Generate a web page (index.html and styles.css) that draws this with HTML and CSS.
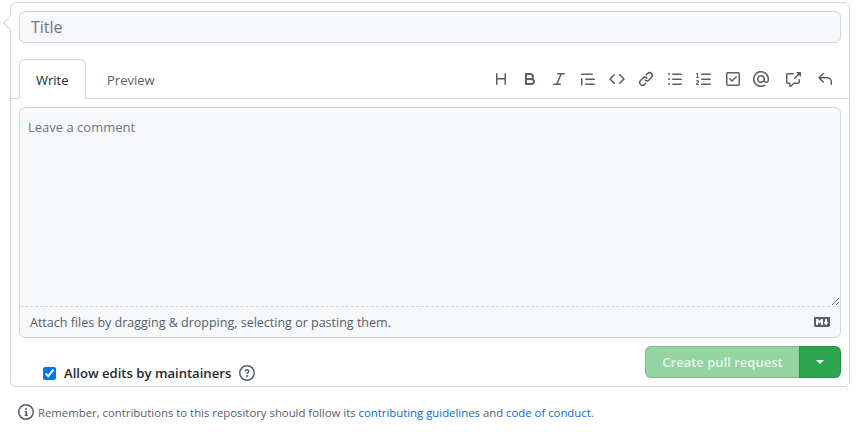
FILE: index.html
```html
<!DOCTYPE html>
<html lang="en">
<head>
    <meta charset="UTF-8">
    <title>Open a pull request</title>
    <link rel="stylesheet" href="styles.css">
</head>
<body>
    <div class="discussion-box">
        <span class="caret"></span>
        <div class="title-row">
            <input type="text" class="title-input" placeholder="Title">
        </div>

        <div class="tab-bar">
            <div class="tabs">
                <span class="tab selected">Write</span>
                <span class="tab">Preview</span>
            </div>
            <div class="toolbar">
                <svg class="icon" viewBox="0 0 16 16"><path d="M3.75 2a.75.75 0 0 1 .75.75V7h7V2.75a.75.75 0 0 1 1.5 0v10.5a.75.75 0 0 1-1.5 0V8.5h-7v4.75a.75.75 0 0 1-1.5 0V2.75A.75.75 0 0 1 3.75 2Z"/></svg>
                <svg class="icon" viewBox="0 0 16 16"><path d="M4 2h4.5a3.501 3.501 0 0 1 2.852 5.53A3.499 3.499 0 0 1 9.5 14H4a1 1 0 0 1-1-1V3a1 1 0 0 1 1-1Zm1 7v3h4.5a1.5 1.5 0 0 0 0-3Zm3.5-2a1.5 1.5 0 0 0 0-3H5v3Z"/></svg>
                <svg class="icon" viewBox="0 0 16 16"><path d="M6 2.75A.75.75 0 0 1 6.75 2h6.5a.75.75 0 0 1 0 1.5h-2.505l-3.858 9H9.25a.75.75 0 0 1 0 1.5h-6.5a.75.75 0 0 1 0-1.5h2.505l3.858-9H6.75A.75.75 0 0 1 6 2.75Z"/></svg>
                <svg class="icon" viewBox="0 0 16 16"><path d="M1.75 2.5h10.5a.75.75 0 0 1 0 1.5H1.75a.75.75 0 0 1 0-1.5Zm4 5h8.5a.75.75 0 0 1 0 1.5h-8.5a.75.75 0 0 1 0-1.5Zm0 5h8.5a.75.75 0 0 1 0 1.5h-8.5a.75.75 0 0 1 0-1.5ZM2.5 7.75v6a.75.75 0 0 1-1.5 0v-6a.75.75 0 0 1 1.5 0Z"/></svg>
                <svg class="icon" viewBox="0 0 16 16"><path d="m11.28 3.22 4.25 4.25a.75.75 0 0 1 0 1.06l-4.25 4.25a.749.749 0 0 1-1.275-.326.749.749 0 0 1 .215-.734L13.94 8l-3.72-3.72a.749.749 0 0 1 .326-1.275.749.749 0 0 1 .734.215Zm-6.56 0a.751.751 0 0 1 1.042.018.751.751 0 0 1 .018 1.042L2.06 8l3.72 3.72a.749.749 0 0 1-.326 1.275.749.749 0 0 1-.734-.215L.47 8.53a.75.75 0 0 1 0-1.06Z"/></svg>
                <svg class="icon" viewBox="0 0 16 16"><path d="m7.775 3.275 1.25-1.25a3.5 3.5 0 1 1 4.95 4.95l-2.5 2.5a3.5 3.5 0 0 1-4.95 0 .751.751 0 0 1 .018-1.042.751.751 0 0 1 1.042-.018 1.998 1.998 0 0 0 2.83 0l2.5-2.5a2.002 2.002 0 0 0-2.83-2.83l-1.25 1.25a.751.751 0 0 1-1.042-.018.751.751 0 0 1-.018-1.042Zm-4.69 9.64a1.998 1.998 0 0 0 2.83 0l1.25-1.25a.751.751 0 0 1 1.042.018.751.751 0 0 1 .018 1.042l-1.25 1.25a3.5 3.5 0 1 1-4.95-4.95l2.5-2.5a3.5 3.5 0 0 1 4.95 0 .751.751 0 0 1-.018 1.042.751.751 0 0 1-1.042.018 1.998 1.998 0 0 0-2.83 0l-2.5 2.5a1.998 1.998 0 0 0 0 2.83Z"/></svg>
                <svg class="icon" viewBox="0 0 16 16"><path d="M5.75 2.5h8.5a.75.75 0 0 1 0 1.5h-8.5a.75.75 0 0 1 0-1.5Zm0 5h8.5a.75.75 0 0 1 0 1.5h-8.5a.75.75 0 0 1 0-1.5Zm0 5h8.5a.75.75 0 0 1 0 1.5h-8.5a.75.75 0 0 1 0-1.5ZM2 14a1 1 0 1 1 0-2 1 1 0 0 1 0 2Zm1-6a1 1 0 1 1-2 0 1 1 0 0 1 2 0ZM2 4a1 1 0 1 1 0-2 1 1 0 0 1 0 2Z"/></svg>
                <svg class="icon" viewBox="0 0 16 16"><path d="M5 3.25a.75.75 0 0 1 .75-.75h8.5a.75.75 0 0 1 0 1.5h-8.5A.75.75 0 0 1 5 3.25Zm0 5a.75.75 0 0 1 .75-.75h8.5a.75.75 0 0 1 0 1.5h-8.5A.75.75 0 0 1 5 8.25Zm0 5a.75.75 0 0 1 .75-.75h8.5a.75.75 0 0 1 0 1.5h-8.5a.75.75 0 0 1-.75-.75ZM.924 10.32a.5.5 0 0 1-.851-.525l.001-.001.001-.002.002-.004.007-.011c.097-.144.215-.273.348-.384.228-.19.588-.392 1.068-.392.468 0 .858.181 1.126.484.259.294.377.673.377 1.038 0 .987-.686 1.495-1.156 1.845l-.047.035c-.303.225-.522.4-.654.597h1.357a.5.5 0 0 1 0 1H.5a.5.5 0 0 1-.5-.5c0-1.005.692-1.52 1.167-1.875l.035-.025c.531-.396.8-.625.8-1.078a.57.57 0 0 0-.128-.376C1.806 10.068 1.695 10 1.5 10a.658.658 0 0 0-.429.163.835.835 0 0 0-.144.153ZM2.003 2.5V6h.503a.5.5 0 0 1 0 1H.5a.5.5 0 0 1 0-1h.503V3.308l-.28.14a.5.5 0 0 1-.446-.895l1.003-.5a.5.5 0 0 1 .723.447Z"/></svg>
                <svg class="icon" viewBox="0 0 16 16"><path d="M2.75 1h10.5C14.216 1 15 1.784 15 2.75v10.5A1.75 1.75 0 0 1 13.25 15H2.75A1.75 1.75 0 0 1 1 13.25V2.75C1 1.784 1.784 1 2.75 1Zm0 1.5a.25.25 0 0 0-.25.25v10.5c0 .138.112.25.25.25h10.5a.25.25 0 0 0 .25-.25V2.75a.25.25 0 0 0-.25-.25Zm9.03 3.78-4.25 4.25a.75.75 0 0 1-1.06 0L4.22 8.28a.75.75 0 0 1 1.06-1.06L7 8.94l3.72-3.72a.75.75 0 0 1 1.06 1.06Z"/></svg>
                <svg class="icon mention" viewBox="0 0 16 16"><path d="M4.75 2.37a6.501 6.501 0 0 0 6.5 11.26.75.75 0 0 1 .75 1.298A7.999 7.999 0 0 1 .989 4.148 8 8 0 0 1 16 7.75v1.5a2.75 2.75 0 0 1-5.072 1.475 3.999 3.999 0 0 1-6.65-4.19A4 4 0 0 1 12 8v1.25a1.25 1.25 0 0 0 2.5 0V7.867a6.5 6.5 0 0 0-9.75-5.496ZM10.5 8a2.5 2.5 0 1 0-5 0 2.5 2.5 0 0 0 5 0Z"/></svg>
                <svg class="icon group-start" viewBox="0 0 16 16"><path d="M2.75 3.5a.25.25 0 0 0-.25.25v7.5c0 .138.112.25.25.25h2a.75.75 0 0 1 .75.75v2.19l2.72-2.72a.749.749 0 0 1 .53-.22h4.5a.25.25 0 0 0 .25-.25v-2.5a.75.75 0 0 1 1.5 0v2.5A1.75 1.75 0 0 1 13.25 13H9.06l-2.573 2.573A1.458 1.458 0 0 1 4 14.543V13H2.75A1.75 1.75 0 0 1 1 11.25v-7.5C1 2.784 1.784 2 2.75 2h5.5a.75.75 0 0 1 0 1.5ZM16 1.25v4.146a.25.25 0 0 1-.427.177L14.03 4.03l-3.75 3.75a.749.749 0 0 1-1.275-.326.749.749 0 0 1 .215-.734l3.75-3.75-1.543-1.543A.25.25 0 0 1 11.604 1h4.146a.25.25 0 0 1 .25.25Z"/></svg>
                <svg class="icon group-start" viewBox="0 0 16 16"><path d="M6.78 1.97a.75.75 0 0 1 0 1.06L3.81 6h6.44A4.75 4.75 0 0 1 15 10.75v2.5a.75.75 0 0 1-1.5 0v-2.5a3.25 3.25 0 0 0-3.25-3.25H3.81l2.97 2.97a.749.749 0 0 1-.326 1.275.749.749 0 0 1-.734-.215L1.47 7.28a.75.75 0 0 1 0-1.06l4.25-4.25a.75.75 0 0 1 1.06 0Z"/></svg>
            </div>
        </div>

        <div class="write-pane">
            <textarea class="comment-input" placeholder="Leave a comment"></textarea>
            <div class="attach-bar">
                <span>Attach files by dragging &amp; dropping, selecting or pasting them.</span>
                <svg class="icon md-icon" viewBox="0 0 16 16"><path d="M14.85 3c.63 0 1.15.52 1.14 1.15v7.7c0 .63-.51 1.15-1.15 1.15H1.15C.52 13 0 12.48 0 11.84V4.15C0 3.52.52 3 1.15 3ZM9 11V5H7L5.5 7 4 5H2v6h2V8l1.5 1.92L7 8v3Zm2.99.5L14.5 8H13V5h-2v3H9.5Z"/></svg>
            </div>
        </div>

        <div class="actions">
            <label class="maintainer-check">
                <input type="checkbox" checked>
                <span>Allow edits by maintainers</span>
                <svg class="icon help-icon" viewBox="0 0 16 16"><path d="M0 8a8 8 0 1 1 16 0A8 8 0 0 1 0 8Zm8-6.5a6.5 6.5 0 1 0 0 13 6.5 6.5 0 0 0 0-13ZM6.92 6.085h.001a.749.749 0 1 1-1.342-.67c.169-.339.436-.701.849-.977C6.845 4.16 7.369 4 8 4a2.756 2.756 0 0 1 1.637.525c.503.377.863.965.863 1.725 0 .448-.115.83-.329 1.15-.205.307-.47.513-.692.662-.109.072-.22.138-.313.195l-.006.004a6.24 6.24 0 0 0-.26.16.952.952 0 0 0-.276.245.75.75 0 0 1-1.248-.832c.184-.264.42-.489.692-.661.103-.067.207-.132.313-.195l.007-.004c.1-.061.182-.11.258-.161a.969.969 0 0 0 .277-.245C8.96 6.514 9 6.427 9 6.25a.612.612 0 0 0-.262-.525A1.27 1.27 0 0 0 8 5.5c-.369 0-.595.09-.74.187a1.01 1.01 0 0 0-.34.398ZM9 11a1 1 0 1 1-2 0 1 1 0 0 1 2 0Z"/></svg>
            </label>
            <div class="btn-group">
                <button class="btn-create" disabled>Create pull request</button>
                <button class="btn-caret"><span class="down-caret"></span></button>
            </div>
        </div>
    </div>

    <p class="footer-note">
        <svg class="icon" viewBox="0 0 16 16"><path d="M0 8a8 8 0 1 1 16 0A8 8 0 0 1 0 8Zm8-6.5a6.5 6.5 0 1 0 0 13 6.5 6.5 0 0 0 0-13ZM6.5 7.75A.75.75 0 0 1 7.25 7h1a.75.75 0 0 1 .75.75v2.75h.25a.75.75 0 0 1 0 1.5h-2a.75.75 0 0 1 0-1.5h.25v-2h-.25a.75.75 0 0 1-.75-.75ZM8 6a1 1 0 1 1 0-2 1 1 0 0 1 0 2Z"/></svg>
        <span>Remember, contributions to this repository should follow its <a href="#">contributing guidelines</a> and <a href="#">code of conduct</a>.</span>
    </p>
</body>
</html>
```

FILE: styles.css
```css
body {
    font-family: "Open Sans", "Noto Sans", sans-serif;
    font-size: 14px;
    color: #24292f;
    background-color: #ffffff;
    margin: 0;
    padding: 2px 16px 0 10px;
    overflow: hidden;
}

.icon {
    display: block;
    width: 16px;
    height: 16px;
    flex: none;
    fill: #57606a;
}

.discussion-box {
    position: relative;
    height: 385px;
    box-sizing: border-box;
    border: 1px solid #d0d7de;
    border-radius: 6px;
    background-color: #ffffff;
}

/* little arrow on the left edge */
.caret {
    position: absolute;
    left: -6px;
    top: 15px;
    width: 9px;
    height: 9px;
    background-color: #ffffff;
    border-left: 1px solid #d0d7de;
    border-bottom: 1px solid #d0d7de;
    transform: rotate(45deg);
}

.title-row {
    padding: 8px 8px 0;
}

.title-input {
    display: block;
    width: 100%;
    height: 32px;
    box-sizing: border-box;
    padding: 0 11px;
    border: 1px solid #d0d7de;
    border-radius: 6px;
    background-color: #f6f8fa;
    font-family: inherit;
    font-size: 16px;
}

.title-input::placeholder, .comment-input::placeholder {
    color: #6e7781;
    opacity: 1;
}

.tab-bar {
    display: flex;
    justify-content: space-between;
    align-items: center;
    height: 40px;
    margin-top: 15px;
    padding: 0 8px;
    border-bottom: 1px solid #d0d7de;
}

.tabs {
    display: flex;
    align-self: flex-end;
    margin-bottom: -1px;
}

.tab {
    height: 40px;
    box-sizing: border-box;
    padding: 0 16px;
    border: 1px solid transparent;
    border-radius: 6px 6px 0 0;
    line-height: 40px;
    font-size: 13px;
    color: #57606a;
    margin-right: 4px;
}

.tab.selected {
    width: 67px;
    color: #24292f;
    border-color: #d0d7de;
    border-bottom-color: #ffffff;
}

.toolbar {
    display: flex;
    gap: 13px;
    padding-right: 8px;
    margin-top: 1px;
}

.toolbar .mention {
    margin-left: -1px;
}

.toolbar .group-start {
    margin-left: 3px;
}

.write-pane {
    margin: 8px 8px 0;
    height: 231px;
    box-sizing: border-box;
    border: 1px solid #d0d7de;
    border-radius: 6px;
    background-color: #f6f8fa;
    display: flex;
    flex-direction: column;
}

.comment-input {
    display: block;
    flex: 1;
    min-height: 0;
    padding: 9px 8px 8px;
    border: none;
    border-bottom: 1px dashed #d0d7de;
    outline: none;
    background: transparent;
    font-family: inherit;
    font-size: 13px;
    line-height: 21px;
    resize: vertical;
}

.attach-bar {
    display: flex;
    justify-content: space-between;
    align-items: center;
    height: 30px;
    padding: 0 10px;
    font-size: 12.5px;
    color: #57606a;
}

.actions {
    display: flex;
    justify-content: space-between;
    padding: 8px 8px 0 32px;
}

.maintainer-check {
    display: flex;
    align-items: center;
    height: 18px;
    margin-top: 18px;
    font-size: 13.1px;
    font-weight: 600;
}

.maintainer-check input {
    width: 13px;
    height: 13px;
    margin: 0 8px 0 0;
}

.help-icon {
    margin-left: 8px;
}

.btn-group {
    display: flex;
    height: 32px;
}

.btn-create {
    width: 154px;
    padding: 0;
    border: 1px solid rgba(27, 31, 36, 0.15);
    border-right: none;
    border-radius: 6px 0 0 6px;
    background-color: #94d3a2;
    color: rgba(255, 255, 255, 0.8);
    font-family: inherit;
    font-size: 13px;
    font-weight: 600;
}

.btn-caret {
    width: 42px;
    display: flex;
    align-items: center;
    justify-content: center;
    padding: 0;
    border: 1px solid rgba(27, 31, 36, 0.15);
    border-radius: 0 6px 6px 0;
    background-color: #2da44e;
}

.down-caret {
    width: 0;
    height: 0;
    border-style: solid;
    border-width: 4px 4px 0;
    border-color: #ffffff transparent transparent;
}

.footer-note {
    display: flex;
    align-items: center;
    gap: 4px;
    margin: 17px 0 0 8px;
    font-size: 11.35px;
    color: #57606a;
}

.footer-note a {
    color: #0969da;
    text-decoration: none;
}
```
